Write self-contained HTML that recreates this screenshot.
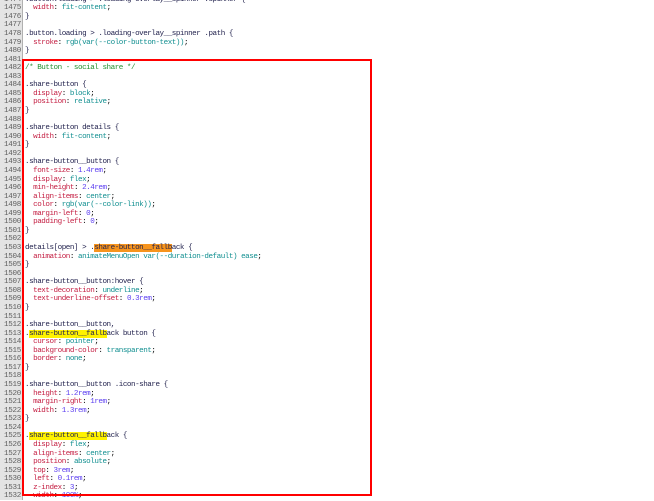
<!DOCTYPE html>
<html><head><style>
body{margin:0;width:654px;height:500px;overflow:hidden;background:#fff;position:relative}
#g{position:absolute;left:0;top:0;width:22px;height:500px;background:#e4e4e4;border-right:1px solid #b0b0b0}
.c{position:absolute;top:-4.3px;left:0;font-family:"Liberation Mono",monospace;font-size:7.6px;letter-spacing:-0.48px;line-height:8.57px;white-space:pre}
.n{display:inline-block;width:21px;text-align:right;color:#606060;margin-right:4px;letter-spacing:-0.3px}
.s{color:#24244f}.p{color:#c41e42}.v{color:#118f90}.m{color:#5a3cf0}.cm{color:#23902f}
.o{background:#f7941d}.y{background:#fff200}
#box{position:absolute;left:22px;top:59px;width:346px;height:433px;border:2px solid #f00}
</style></head><body>
<div id="g"></div>
<div class="c"><span class="n">1474</span><span class="s">.button.loading &gt; .loading-overlay__spinner .spinner {</span>
<span class="n">1475</span>  <span class="p">width</span>: <span class="v">fit-content</span>;
<span class="n">1476</span><span class="s">}</span>
<span class="n">1477</span>
<span class="n">1478</span><span class="s">.button.loading &gt; .loading-overlay__spinner .path {</span>
<span class="n">1479</span>  <span class="p">stroke</span>: <span class="v">rgb(var(--color-button-text))</span>;
<span class="n">1480</span><span class="s">}</span>
<span class="n">1481</span>
<span class="n">1482</span><span class="cm">/* Button - social share */</span>
<span class="n">1483</span>
<span class="n">1484</span><span class="s">.share-button {</span>
<span class="n">1485</span>  <span class="p">display</span>: <span class="v">block</span>;
<span class="n">1486</span>  <span class="p">position</span>: <span class="v">relative</span>;
<span class="n">1487</span><span class="s">}</span>
<span class="n">1488</span>
<span class="n">1489</span><span class="s">.share-button details {</span>
<span class="n">1490</span>  <span class="p">width</span>: <span class="v">fit-content</span>;
<span class="n">1491</span><span class="s">}</span>
<span class="n">1492</span>
<span class="n">1493</span><span class="s">.share-button__button {</span>
<span class="n">1494</span>  <span class="p">font-size</span>: <span class="m">1.4rem</span>;
<span class="n">1495</span>  <span class="p">display</span>: <span class="v">flex</span>;
<span class="n">1496</span>  <span class="p">min-height</span>: <span class="m">2.4rem</span>;
<span class="n">1497</span>  <span class="p">align-items</span>: <span class="v">center</span>;
<span class="n">1498</span>  <span class="p">color</span>: <span class="v">rgb(var(--color-link))</span>;
<span class="n">1499</span>  <span class="p">margin-left</span>: <span class="m">0</span>;
<span class="n">1500</span>  <span class="p">padding-left</span>: <span class="m">0</span>;
<span class="n">1501</span><span class="s">}</span>
<span class="n">1502</span>
<span class="n">1503</span><span class="s">details[open] &gt; .<span class="o">share-button__fallb</span>ack {</span>
<span class="n">1504</span>  <span class="p">animation</span>: <span class="v">animateMenuOpen var(--duration-default) ease</span>;
<span class="n">1505</span><span class="s">}</span>
<span class="n">1506</span>
<span class="n">1507</span><span class="s">.share-button__button:hover {</span>
<span class="n">1508</span>  <span class="p">text-decoration</span>: <span class="v">underline</span>;
<span class="n">1509</span>  <span class="p">text-underline-offset</span>: <span class="m">0.3rem</span>;
<span class="n">1510</span><span class="s">}</span>
<span class="n">1511</span>
<span class="n">1512</span><span class="s">.share-button__button,</span>
<span class="n">1513</span><span class="s">.<span class="y">share-button__fallb</span>ack button {</span>
<span class="n">1514</span>  <span class="p">cursor</span>: <span class="v">pointer</span>;
<span class="n">1515</span>  <span class="p">background-color</span>: <span class="v">transparent</span>;
<span class="n">1516</span>  <span class="p">border</span>: <span class="v">none</span>;
<span class="n">1517</span><span class="s">}</span>
<span class="n">1518</span>
<span class="n">1519</span><span class="s">.share-button__button .icon-share {</span>
<span class="n">1520</span>  <span class="p">height</span>: <span class="m">1.2rem</span>;
<span class="n">1521</span>  <span class="p">margin-right</span>: <span class="m">1rem</span>;
<span class="n">1522</span>  <span class="p">width</span>: <span class="m">1.3rem</span>;
<span class="n">1523</span><span class="s">}</span>
<span class="n">1524</span>
<span class="n">1525</span><span class="s">.<span class="y">share-button__fallb</span>ack {</span>
<span class="n">1526</span>  <span class="p">display</span>: <span class="v">flex</span>;
<span class="n">1527</span>  <span class="p">align-items</span>: <span class="v">center</span>;
<span class="n">1528</span>  <span class="p">position</span>: <span class="v">absolute</span>;
<span class="n">1529</span>  <span class="p">top</span>: <span class="m">3rem</span>;
<span class="n">1530</span>  <span class="p">left</span>: <span class="m">0.1rem</span>;
<span class="n">1531</span>  <span class="p">z-index</span>: <span class="m">3</span>;
<span class="n">1532</span>  <span class="p">width</span>: <span class="m">100%</span>;</div>
<div id="box"></div>
</body></html>
